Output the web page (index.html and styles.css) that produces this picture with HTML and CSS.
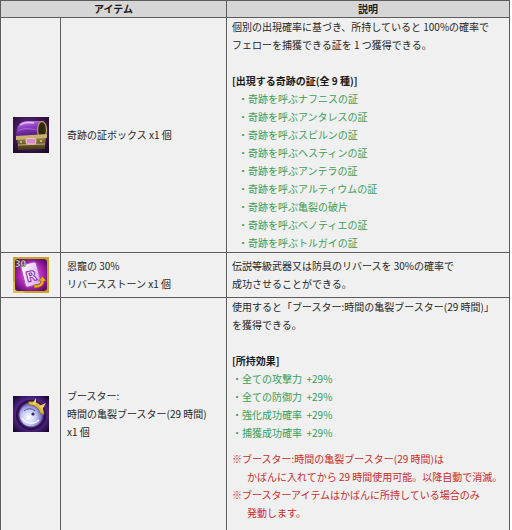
FILE: index.html
```html
<!DOCTYPE html>
<html lang="ja">
<head>
<meta charset="utf-8">
<title>アイテム</title>
<link rel="stylesheet" href="styles.css">
</head>
<body>
<table class="items">
  <colgroup><col class="c-icon"><col class="c-name"><col class="c-desc"></colgroup>
  <thead>
    <tr><th colspan="2">アイテム</th><th>説明</th></tr>
  </thead>
  <tbody>
    <tr>
      <td class="icon">
        <svg width="36" height="36" viewBox="0 0 36 36">
          <defs>
            <radialGradient id="bg1" cx="45%" cy="40%" r="75%"><stop offset="0" stop-color="#6a2f8e"/><stop offset="1" stop-color="#1c0828"/></radialGradient>
            <linearGradient id="lid1" x1="0" y1="0" x2="0.3" y2="1"><stop offset="0" stop-color="#d08ef0"/><stop offset="0.45" stop-color="#8a3cc0"/><stop offset="1" stop-color="#4a1470"/></linearGradient>
            <linearGradient id="body1" x1="0" y1="0" x2="0" y2="1"><stop offset="0" stop-color="#a8924e"/><stop offset="1" stop-color="#3e341a"/></linearGradient>
          </defs>
          <rect width="36" height="36" fill="url(#bg1)"/>
          <path d="M3 19 C3 9 7 4 15 4 L27 4 C31 5 33 10 33 17 L32 20 L4 21 Z" fill="url(#lid1)"/>
          <path d="M7 8 C11 5 16 5 21 6" stroke="#f0d0ff" stroke-width="1.4" fill="none" opacity="0.85"/>
          <path d="M5 14 C10 11 16 11 23 13" stroke="#c890e8" stroke-width="0.8" fill="none" opacity="0.7"/>
          <ellipse cx="29" cy="13" rx="4.5" ry="8.5" fill="#2e2814" stroke="#b09858" stroke-width="1.4"/>
          <path d="M4 20 L33 18 L32 32 L5 33 Z" fill="url(#body1)"/>
          <path d="M3 19 L34 17 L34 21 L3 23 Z" fill="#c8b070"/>
          <path d="M5 28 L32 27" stroke="#d0b878" stroke-width="0.9"/>
          <rect x="13" y="21.5" width="10" height="5.5" rx="1.5" fill="#d88ad0" stroke="#f0dca0" stroke-width="0.8"/>
          <circle cx="8" cy="25" r="1.1" fill="#e0c888"/>
          <circle cx="28" cy="24" r="1.1" fill="#e0c888"/>
        </svg>
      </td>
      <td class="name">奇跡の証ボックス x1 個</td>
      <td class="desc">
        <p>個別の出現確率に基づき、所持していると 100%の確率で<br>フェローを捕獲できる証を 1 つ獲得できる。</p>
        <p class="sec">[出現する奇跡の証(全 9 種)]</p>
        <ul class="green indent">
          <li>・奇跡を呼ぶナフニスの証</li>
          <li>・奇跡を呼ぶアンタレスの証</li>
          <li>・奇跡を呼ぶスピルンの証</li>
          <li>・奇跡を呼ぶヘスティンの証</li>
          <li>・奇跡を呼ぶアンテラの証</li>
          <li>・奇跡を呼ぶアルティウムの証</li>
          <li>・奇跡を呼ぶ亀裂の破片</li>
          <li>・奇跡を呼ぶベノティエの証</li>
          <li>・奇跡を呼ぶトルガイの証</li>
        </ul>
      </td>
    </tr>
    <tr>
      <td class="icon">
        <svg width="36" height="36" viewBox="0 0 36 36">
          <defs>
            <radialGradient id="bg2" cx="50%" cy="50%" r="60%"><stop offset="0" stop-color="#f890f0"/><stop offset="0.5" stop-color="#c030c0"/><stop offset="1" stop-color="#620c70"/></radialGradient>
            <linearGradient id="st2" x1="0" y1="0" x2="1" y2="1"><stop offset="0" stop-color="#ffffff"/><stop offset="1" stop-color="#d8a4ee"/></linearGradient>
          </defs>
          <rect width="36" height="36" fill="#c8a624"/>
          <path d="M0 36 L0 24 L12 36 Z" fill="#e0c040"/>
          <rect x="2" y="2" width="32" height="32" rx="3" fill="url(#bg2)"/>
          <g transform="rotate(-14 18 18)">
            <rect x="10" y="6" width="16" height="23" rx="2.5" fill="url(#st2)" stroke="#a050c0" stroke-width="1"/>
            <text x="18" y="24" class="rune">R</text>
          </g>
          <path d="M21 31 C28 31 31 28 31 24 L33.5 24 L29.5 19.5 L25.5 24 L28 24 C28 27 26 28 21 28 Z" fill="#f4a820" stroke="#8a5008" stroke-width="0.6"/>
          <text x="2" y="10" class="badge">30</text>
        </svg>
      </td>
      <td class="name">恩寵の 30%<br>リバースストーン x1 個</td>
      <td class="desc">
        <p>伝説等級武器又は防具のリバースを 30%の確率で<br>成功させることができる。</p>
      </td>
    </tr>
    <tr>
      <td class="icon">
        <svg width="36" height="36" viewBox="0 0 36 36">
          <defs>
            <radialGradient id="bg3" cx="50%" cy="50%" r="65%"><stop offset="0" stop-color="#b070f0"/><stop offset="0.6" stop-color="#5a2898"/><stop offset="1" stop-color="#1a0a30"/></radialGradient>
            <radialGradient id="disc3" cx="40%" cy="60%" r="60%"><stop offset="0" stop-color="#ffffff"/><stop offset="0.55" stop-color="#c0c8f4"/><stop offset="1" stop-color="#6a64b8"/></radialGradient>
          </defs>
          <rect width="36" height="36" fill="url(#bg3)"/>
          <circle cx="18" cy="19" r="14" fill="none" stroke="#2a1444" stroke-width="2.5"/>
          <circle cx="18" cy="19" r="11.5" fill="url(#disc3)"/>
          <path d="M15 6 C24 4 32 10 31 19 L27 17 C26 12 22 9 16 9 Z" fill="#d8b848" stroke="#6a5018" stroke-width="0.6"/>
          <path d="M19 8 L23 2 L23 9 Z" fill="#ecd068"/>
          <path d="M26 10 L33 7 L29 14 Z" fill="#ecd068"/>
          <path d="M9 22 C12 28 21 29 26 24" stroke="#ffffff" stroke-width="1.2" fill="none" opacity="0.9"/>
          <path d="M11 15 C14 12 19 12 22 15" stroke="#5a4a9a" stroke-width="1" fill="none"/>
          <circle cx="20" cy="18" r="1.6" fill="#3a2a6a"/>
        </svg>
      </td>
      <td class="name">ブースター:<br>時間の亀裂ブースター(29 時間)<br>x1 個</td>
      <td class="desc last">
        <p>使用すると「ブースター:時間の亀裂ブースター(29 時間)」<br>を獲得できる。</p>
        <p class="sec">[所持効果]</p>
        <ul class="green">
          <li>・全ての攻撃力 &nbsp;+29%</li>
          <li>・全ての防御力 &nbsp;+29%</li>
          <li>・強化成功確率 &nbsp;+29%</li>
          <li>・捕獲成功確率 &nbsp;+29%</li>
        </ul>
        <ul class="red">
          <li>※ブースター:時間の亀裂ブースター(29 時間)は</li>
          <li class="cont">かばんに入れてから 29 時間使用可能。以降自動で消滅。</li>
          <li>※ブースターアイテムはかばんに所持している場合のみ</li>
          <li class="cont">発動します。</li>
        </ul>
      </td>
    </tr>
  </tbody>
</table>
</body>
</html>
```

FILE: styles.css
```css
html, body {
  margin: 0;
  padding: 0;
  background: #ffffff;
}
body {
  font-family: "Noto Sans CJK JP", "Noto Sans", sans-serif;
  font-size: 10px;
  color: #262626;
}
.items {
  border-collapse: collapse;
  table-layout: fixed;
  width: 510px;
  background: #f0f0f0;
}
.c-icon { width: 60px; }
.c-name { width: 166px; }
.items th,
.items td {
  border: 1px solid #5c5c5c;
  padding: 0;
  vertical-align: middle;
}
.items th {
  background: #d6d6d6;
  height: 16px;
  line-height: 16px;
  font-weight: bold;
  text-align: center;
  color: #1a1a1a;
}
.items td.icon {
  text-align: center;
  padding: 4px 0;
}
.icon svg {
  display: block;
  margin: 0 auto;
}
.items td.name {
  padding-left: 6px;
  line-height: 18px;
}
.items td.desc {
  padding: 0 4px 0 5px;
  line-height: 18px;
}
.desc p,
.desc ul {
  margin: 0;
  padding: 0;
  list-style: none;
}
.desc .sec {
  margin-top: 18px;
  font-weight: bold;
  color: #1a1a1a;
}
.green { color: #389e5a; }
.green.indent li { padding-left: 6px; }
.desc .red {
  color: #cc2a2a;
  margin-top: 8px;
}
.red .cont { padding-left: 15px; }
.items td.desc.last { padding-bottom: 8px; }
.rune {
  font-family: "DejaVu Sans", sans-serif;
  font-size: 14px;
  font-weight: bold;
  fill: #f4e8ff;
  stroke: #8a2aa8;
  stroke-width: 1;
  text-anchor: middle;
}
.badge {
  font-family: "DejaVu Sans", sans-serif;
  font-size: 8px;
  font-weight: bold;
  fill: #ffffff;
  stroke: #3a2a10;
  stroke-width: 0.5;
}
```
